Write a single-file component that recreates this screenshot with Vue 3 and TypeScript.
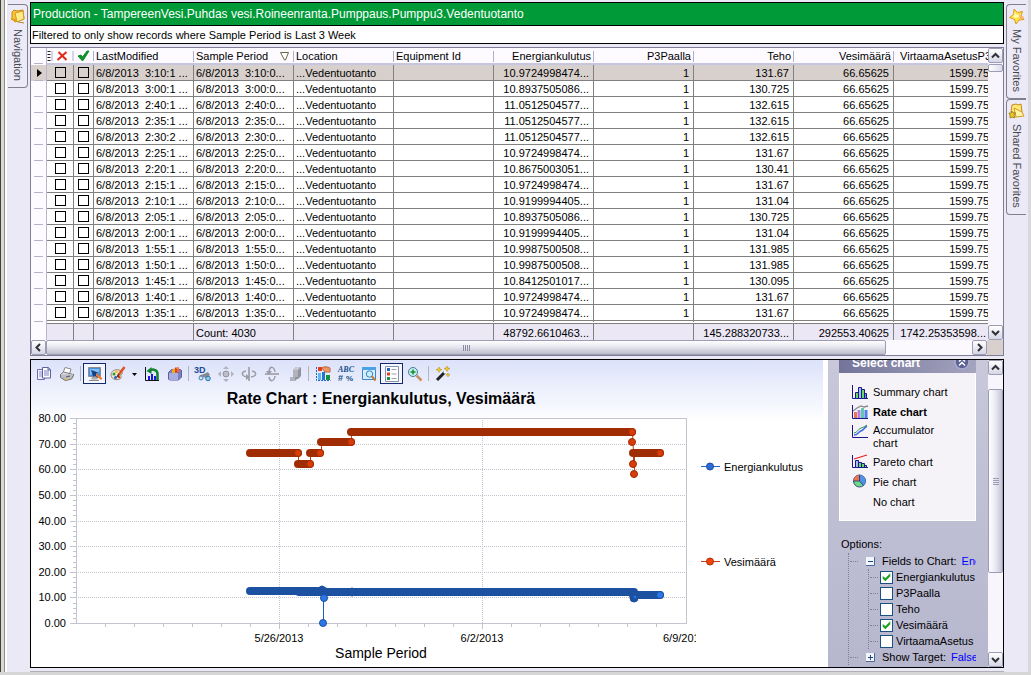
<script setup lang="ts">
interface RecordRow {
  modified: string
  period: string
  energy: string
  power: string
}

interface Tool {
  icon: string
  label: string
  active?: boolean
  menu?: boolean
}

interface Segment {
  from: number
  to: number
  y: number
}

const times: [string, string, string, string][] = [
  ['3:10:1', '3:10:0', '10.9724998474...', '131.67'],
  ['3:00:1', '3:00:0', '10.8937505086...', '130.725'],
  ['2:40:1', '2:40:0', '11.0512504577...', '132.615'],
  ['2:35:1', '2:35:0', '11.0512504577...', '132.615'],
  ['2:30:2', '2:30:0', '11.0512504577...', '132.615'],
  ['2:25:1', '2:25:0', '10.9724998474...', '131.67'],
  ['2:20:1', '2:20:0', '10.8675003051...', '130.41'],
  ['2:15:1', '2:15:0', '10.9724998474...', '131.67'],
  ['2:10:1', '2:10:0', '10.9199994405...', '131.04'],
  ['2:05:1', '2:05:0', '10.8937505086...', '130.725'],
  ['2:00:1', '2:00:0', '10.9199994405...', '131.04'],
  ['1:55:1', '1:55:0', '10.9987500508...', '131.985'],
  ['1:50:1', '1:50:0', '10.9987500508...', '131.985'],
  ['1:45:1', '1:45:0', '10.8412501017...', '130.095'],
  ['1:40:1', '1:40:0', '10.9724998474...', '131.67'],
  ['1:35:1', '1:35:0', '10.9724998474...', '131.67'],
]

const rows: RecordRow[] = times.map(([m, p, energy, power]) => ({
  modified: `6/8/2013  ${m} ...`,
  period: `6/8/2013  ${p}...`,
  energy,
  power,
}))

const toolGroups: Tool[][] = [
  [
    { icon: 'copy', label: 'Copy' },
    { icon: 'print', label: 'Print' },
  ],
  [
    { icon: 'monitor', label: 'Pointer', active: true },
    { icon: 'palette', label: 'Palette', menu: true },
    { icon: 'rotateBars', label: 'Chart type' },
    { icon: 'box', label: 'Gallery' },
  ],
  [
    { icon: 'threeD', label: '3D view' },
    { icon: 'move', label: 'Move' },
    { icon: 'spinY', label: 'Rotate around Y' },
    { icon: 'spinX', label: 'Rotate around X' },
    { icon: 'depth', label: 'Depth' },
  ],
  [
    { icon: 'series', label: 'Series' },
    { icon: 'abc', label: 'Point labels' },
    { icon: 'preview', label: 'Data view' },
    { icon: 'legend', label: 'Legend', active: true },
    { icon: 'zoom', label: 'Zoom' },
  ],
  [{ icon: 'wand', label: 'Wizard' }],
]

const icons: Record<string, string> = {
  copy: '<path d="M1.500 3.500h7v10h-7z" fill="#eef0ff" stroke="#6b6fb0"/><path d="M3 6h4M3 8h4M3 10h4" stroke="#8f93c8"/><path d="M6.500 1.500h6l2 2v8.500h-8z" fill="#fff" stroke="#5e62a4"/><path d="M8 5h5M8 7h5M8 9h5" stroke="#7a7fc0"/><path d="M12 1.500v2.500h2.500" fill="#c5c8ec" stroke="#5e62a4"/>',
  print: '<path d="M4 7l2-5.500 6 1.500-1.500 5z" fill="#fff" stroke="#888"/><path d="M1.500 8.500l3-2.500 10 2.500-2 3.500-7 2z" fill="#e2e2e6" stroke="#777"/><path d="M1.500 8.500v3l5 3 6-1.500 2-3.500v-1.500" fill="#bdbdc6" stroke="#707078"/><path d="M7 11l4-1" stroke="#555"/><path d="M5 13l5 1" stroke="#d8b84a"/>',
  monitor: '<path d="M1.500 1.500h12v9h-12z" fill="#4a8fd8" stroke="#8c8c94"/><path d="M3 3h9v3l-9 3z" fill="#7cc0f4"/><path d="M5 11h5l1 2.500h-7z" fill="#aaa" /><path d="M2 14.500h10" stroke="#888"/><path d="M4 4l7 2.500-2 1.300 3 2.500-1.500 1.700-2.800-2.500-1.300 1.500z" fill="#173c86"/><path d="M9 7l6.500 5.500-1.500 1.500-5-4z" fill="#f07828"/>',
  palette: '<path d="M1 9c0-4 4-6 8-5 4 1 4 3 2 5-1 1 1 2 0 3-2 3-10 2-10-3z" fill="#eee6d8" stroke="#96826a"/><circle cx="4" cy="8" r="1.500" fill="#2a9a38"/><circle cx="6.500" cy="5.800" r="1.300" fill="#e8c020"/><circle cx="5.500" cy="11.500" r="1.500" fill="#2464c8"/><circle cx="9" cy="11" r="1.200" fill="#e03020"/><path d="M14.500 1l-6 8" stroke="#e05020" stroke-width="2.500"/><path d="M9 8l-2 3" stroke="#603818" stroke-width="1.500"/>',
  rotateBars: '<path d="M1.500 1v13.500h13.500" fill="none" stroke="#111"/><path d="M4 10h2v4h-2zM7 8h2v6h-2zM10 10h2v4h-2z" fill="#1818e0"/><path d="M13.500 14v-6c0-4-4-5-7-4" fill="none" stroke="#11832a" stroke-width="2.500"/><path d="M2.500 5l5-4v7z" fill="#11832a"/>',
  box: '<path d="M1.500 6.500l3-3h9l1 1v6.500l-3 3h-9l-1-1z" fill="#7b7fc4" stroke="#5c5e9c"/><path d="M2 7h9v7h-8l-1-1z" fill="#a9addf"/><path d="M5 4l3-2v5h-3z" fill="#e8b020"/><path d="M8 1.500h4v5h-4z" fill="#e04018"/><path d="M9 2h2v4" stroke="#ff9860" fill="none"/>',
  threeD: '<text x="-1" y="7" font-family="Liberation Sans, Arial, sans-serif" font-size="9" font-weight="bold" fill="#1c4c98">3D</text><path d="M4 9.500l5-1.500 4-2 2 3-4 3z" fill="#888890"/><circle cx="6" cy="12" r="2" fill="#c8ecff" stroke="#4a7ea8"/><circle cx="13" cy="12.500" r="2.300" fill="#80d0f8" stroke="#36709c"/>',
  move: '<circle cx="8" cy="8" r="3" fill="#bcbcc6" stroke="#93939f"/><path d="M8 0l3 3h-6zM8 16l3-3h-6zM0 8l3-3v6zM16 8l-3-3v6z" fill="#b2b2be"/>',
  spinY: '<path d="M8 1v14" stroke="#aaaab4" stroke-width="2"/><path d="M5 5c-5 1-5 5 1 6M11 5c5 1 5 5-1 6" fill="none" stroke="#9c9ca8" stroke-width="1.500"/><path d="M5 8l4 3-4 3z" fill="#9c9ca8"/>',
  spinX: '<path d="M1 8h14" stroke="#aaaab4" stroke-width="2"/><path d="M5 5c1-5 5-5 6 1M5 11c1 5 5 5 6-1" fill="none" stroke="#9c9ca8" stroke-width="1.500"/><path d="M2 5l6 0-3 4z" fill="#9c9ca8"/>',
  depth: '<path d="M6 4l3-3h5v9l-3 3h-1l-2 2h-5v-4h3z" fill="#92929c"/><path d="M6 4l3-3h5l-3 3z" fill="#cacad2"/><path d="M6 4h5v7h-3v4h-5v-4h3z" fill="#b2b2bc"/>',
  series: '<path d="M1.500 1v13.500h14" fill="none" stroke="#3060c0" stroke-dasharray="2 1"/><path d="M3 1h4v4h-4z" fill="#e04020"/><path d="M7 2c2-2 6-1 8 0v4h-5z" fill="#f09868" stroke="#b86838"/><path d="M3 7h3v7h-3z" fill="#60b8f0"/><path d="M7 6h3v8h-3z" fill="#2078d0"/><path d="M11 9h4v5h-4z" fill="#18903c"/>',
  abc: '<text x="0" y="6" font-family="Liberation Serif, serif" font-size="8" font-style="italic" font-weight="bold" fill="#16508c">ABC</text><text x="0" y="15" font-family="Liberation Sans, sans-serif" font-size="9" font-weight="bold" fill="#16508c">#</text><text x="8" y="15" font-family="Liberation Sans, sans-serif" font-size="8" font-weight="bold" fill="#16508c">%</text>',
  preview: '<path d="M1.500 1.500h13v12h-13z" fill="#d8ecff" stroke="#3888c8"/><path d="M1 1h14v3h-14z" fill="#48a4e4"/><circle cx="8.500" cy="8" r="3.200" fill="#c8f0ff" stroke="#3a84b4"/><path d="M11 10.500l3.500 4" stroke="#c87830" stroke-width="2"/>',
  legend: '<path d="M1.500.500h13v15h-13z" fill="#fff" stroke="#8890a8"/><path d="M3 2h3v3h-3z" fill="#2060c8"/><path d="M3 6.500h3v3h-3z" fill="#e04020"/><path d="M3 11h3v3h-3z" fill="#189040"/><path d="M7.500 3.500h5M7.500 8h5M7.500 12.500h5" stroke="#98a0b0"/>',
  zoom: '<path d="M9.500 9.500l5 5" stroke="#c89068" stroke-width="2.500"/><circle cx="6" cy="6" r="4.500" fill="#c8ecf8" stroke="#448090"/><path d="M6 3.500v5M3.500 6h5" stroke="#109020" stroke-width="1.500"/>',
  wand: '<path d="M2 14l8-8" stroke="#222" stroke-width="3"/><path d="M9 7l1.500-1.500" stroke="#fff" stroke-width="2.500"/><path d="M4 1l1 2 2 .500-2 1-1 2-1-2-2-1 2-.500zM12 0l1 2 2 .500-2 1-1 2-1-2-2-1 2-.500zM13 7l.700 1.300 1.300.500-1.300.700-.700 1.500-.700-1.500-1.300-.700 1.300-.500z" fill="#f4c828" stroke="#b08818" stroke-width=".5"/>',
  star: '<path d="M5 1l3.500 3.500 5-1-1.500 4.500 3 3.500-5 .500-3 4-1.500-4.500-5-2 4-3z" fill="#ffe23c" stroke="#d8992a"/><path d="M6 4l2 3 4-1-2 3-4 1-2-1z" fill="#fffbb0"/><path d="M10 6l5 3-4 4z" fill="#f8b468"/>',
  folders: '<path d="M2 4l2-2 3 1 6-1 1 9-9 3-3-3z" fill="#f8c838" stroke="#c88818"/><path d="M5 5l8-2 1 8-7 3z" fill="#ffeb88" stroke="#d29a20"/><path d="M1 11l5 1" stroke="#e8a020" stroke-width="2"/><path d="M8 14l6 1" stroke="#b88820"/>',
  sharedFolders: '<path d="M3 2l4-1 2 1 3-1 1 8-8 1-3-1z" fill="#ffe878" stroke="#c88818"/><path d="M5 5l8 4 2 4-8 1z" fill="#fff4a8" stroke="#d29a20"/><path d="M3 8l1 2 3 0-2 2 1 3-3-1-2 1 0-3-1-2 2 0z" fill="#e8c828" stroke="#a88820"/>',
  summary: '<path d="M.500 1v13.500h15.500" fill="none" stroke="#18188c"/><path d="M3.500 8.500h3v6h-3zM9.500 5.500h3v9h-3z" fill="#68d868" stroke="#18188c"/><path d="M6.500 3.500h3v11h-3z" fill="#a8c0f0" stroke="#18188c"/><path d="M12.500 9.500h2v5h-2z" fill="#6890e0" stroke="#18188c"/>',
  rate: '<path d="M.500 1v13.500h15.500" fill="none" stroke="#18188c"/><path d="M2 8h3v6h-3z" fill="#f07050"/><path d="M5.500 6h3v8h-3z" fill="#b080e0"/><path d="M9 4h3v10h-3z" fill="#60c8b0"/><path d="M12.500 6h3v8h-3z" fill="#5080e8"/><path d="M1 7l4-3 4-2 3 1 4-1" fill="none" stroke="#888" stroke-width="1.300"/>',
  accumulator: '<path d="M.500 1v12.500h15.500" fill="none" stroke="#18188c"/><path d="M2 11c4 0 4-3 7-4s4-4 6-5" fill="none" stroke="#3c68e0" stroke-width="1.500"/><path d="M2 9c3 0 4-4 7-5s3-1 6-3" fill="none" stroke="#289a4a"/>',
  pareto: '<path d="M.500 1v12.500h15.500" fill="none" stroke="#18188c"/><path d="M3.500 6.500h3v7h-3z" fill="#a8c0f0" stroke="#18188c"/><path d="M6.500 8.500h3v5h-3zM9.500 9.500h3v4h-3zM12.500 11.500h2v2h-2z" fill="#68d868" stroke="#18188c"/><path d="M2 5l13-4" stroke="#e82020" stroke-width="1.300"/>',
  pie: '<circle cx="7.500" cy="7" r="6" fill="#70d888" stroke="#304878"/><path d="M7.500 7v-6a6 6 0 0 1 4 10.500z" fill="#5090e8"/><path d="M7.500 7h-6a6 6 0 0 1 6-6z" fill="#f07050"/><path d="M7.500 1v6l4 4.500M7.500 7h-6" fill="none" stroke="#304878"/>',
  none: '',
}

const charts = [
  { icon: 'summary', label: 'Summary chart' },
  { icon: 'rate', label: 'Rate chart', current: true },
  { icon: 'accumulator', label: 'Accumulator chart' },
  { icon: 'pareto', label: 'Pareto chart' },
  { icon: 'pie', label: 'Pie chart' },
  { icon: 'none', label: 'No chart' },
]

const fields = [
  { name: 'Energiankulutus', on: true },
  { name: 'P3Paalla', on: false },
  { name: 'Teho', on: false },
  { name: 'Vesimäärä', on: true },
  { name: 'VirtaamaAsetus', on: false },
]

// Plot area inside the drawing
const plot = { left: 45, right: 655, top: 31, bottom: 236 }
const yLabels = [0, 10, 20, 30, 40, 50, 60, 70, 80]
const yMinor = Array.from({ length: 41 }, (_, i) => i * 2)
const xTicks = Array.from({ length: 20 }, (_, i) => plot.left + (i + 1) * 29).filter((x) => x < 650)

function valueY(v: number): number {
  return Math.round(plot.bottom - (v * (plot.bottom - plot.top)) / 80)
}

const flowSegments: Segment[] = [
  { from: 219, to: 267, y: 66 },
  { from: 267, to: 279, y: 77 },
  { from: 279, to: 289, y: 66 },
  { from: 290, to: 320, y: 55 },
  { from: 320, to: 601, y: 45 },
  { from: 602, to: 629, y: 66 },
]
const flowPoints: [number, number][] = [
  [267, 66], [279, 77], [289, 66], [320, 55], [601, 45],
  [601, 55], [602, 77], [603, 87], [629, 66],
]
const energySegments: Segment[] = [
  { from: 219, to: 293, y: 204 },
  { from: 268, to: 294, y: 205 },
  { from: 293, to: 603, y: 205 },
  { from: 602, to: 629, y: 208 },
]
</script>

<template>
  <div class="app">
    <nav class="rail rail-left">
      <button class="tab tab-left" type="button">
        <svg class="icon" viewBox="0 0 16 16" v-html="icons.folders" />
        <span>Navigation</span>
      </button>
    </nav>

    <main class="content">
      <h1 class="title">Production - TampereenVesi.Puhdas vesi.Roineenranta.Pumppaus.Pumppu3.Vedentuotanto</h1>
      <p class="filter">Filtered to only show records where Sample Period is Last 3 Week</p>

      <section class="grid">
        <div class="grid-body">
          <div class="table-clip">
            <table>
              <colgroup>
                <col class="c-mark" /><col class="c-del" /><col class="c-ok" />
                <col v-for="n in 9" :key="n" class="c-data" />
              </colgroup>
              <thead>
                <tr>
                  <th class="mark"><span class="tick-line" /></th>
                  <th class="icon-head">
                    <svg class="head-icon" viewBox="0 0 26 14">
                      <path d="M0 2.500h3M0 5.500h3M0 8.500h3M0 11.500h3" stroke="#222" />
                      <path d="M4.500 2v10" stroke="#b0b0cc" />
                      <path d="M11 3l8 8M19 3l-9 8" stroke="#e02818" stroke-width="2" />
                      <path d="M25.500 2v10" stroke="#b0b0cc" />
                    </svg>
                  </th>
                  <th class="icon-head">
                    <svg class="head-icon" viewBox="0 0 20 14">
                      <path d="M4 7l3-1 1.500 2 4.500-6 2 0-5 8-1.500 2z" fill="#11902a" stroke="#11902a" />
                      <path d="M19.500 2v10" stroke="#b0b0cc" />
                    </svg>
                  </th>
                  <th><span>LastModified</span></th>
                  <th>
                    <span class="sorted">Sample Period
                      <svg class="sort" viewBox="0 0 9 9"><path d="M.500.500h8l-3 7.500h-1z" fill="#fff" stroke="#6a6a44" /></svg>
                    </span>
                  </th>
                  <th><span>Location</span></th>
                  <th><span>Equipment Id</span></th>
                  <th class="num"><span>Energiankulutus</span></th>
                  <th class="num"><span>P3Paalla</span></th>
                  <th class="num"><span>Teho</span></th>
                  <th class="num"><span>Vesimäärä</span></th>
                  <th class="num"><span>VirtaamaAsetusP3</span></th>
                </tr>
              </thead>
              <tbody>
                <tr v-for="(r, i) in rows" :key="i" :class="{ selected: i === 0 }">
                  <td class="mark">
                    <span class="tick-line">
                      <svg v-if="i === 0" class="pointer" viewBox="0 0 5 8"><path d="M0 0l5 4-5 4z" /></svg>
                    </span>
                  </td>
                  <td class="pick"><input type="checkbox" :aria-label="`Delete record ${i + 1}`" /></td>
                  <td class="pick"><input type="checkbox" :aria-label="`Approve record ${i + 1}`" /></td>
                  <td>{{ r.modified }}</td>
                  <td>{{ r.period }}</td>
                  <td>...Vedentuotanto</td>
                  <td></td>
                  <td class="num">{{ r.energy }}</td>
                  <td class="num">1</td>
                  <td class="num">{{ r.power }}</td>
                  <td class="num">66.65625</td>
                  <td class="num">1599.75</td>
                </tr>
              </tbody>
              <tfoot>
                <tr>
                  <td class="mark"></td>
                  <td></td>
                  <td></td>
                  <td></td>
                  <td>Count: 4030</td>
                  <td></td>
                  <td></td>
                  <td class="num">48792.6610463...</td>
                  <td></td>
                  <td class="num">145.288320733...</td>
                  <td class="num">292553.40625</td>
                  <td class="num wide">1742.25353598...</td>
                </tr>
              </tfoot>
            </table>
          </div>
          <div class="vscroll">
            <button class="arrow" type="button" aria-label="Scroll up">
              <svg viewBox="0 0 9 9"><path d="M1 6.500l3.500-3.500 3.500 3.500" /></svg>
            </button>
            <div class="thumb thumb-small" />
            <div class="space" />
            <button class="arrow" type="button" aria-label="Scroll down">
              <svg viewBox="0 0 9 9"><path d="M1 3l3.500 3.500 3.500-3.500" /></svg>
            </button>
          </div>
        </div>
        <div class="hscroll">
          <button class="arrow" type="button" aria-label="Scroll left">
            <svg viewBox="0 0 9 9"><path d="M6 1l-3.500 3.500 3.500 3.500" /></svg>
          </button>
          <div class="track">
            <div class="thumb thumb-wide"><span class="grip" /></div>
          </div>
          <button class="arrow" type="button" aria-label="Scroll right">
            <svg viewBox="0 0 9 9"><path d="M3 1l3.500 3.500-3.500 3.500" /></svg>
          </button>
          <span class="corner" />
        </div>
      </section>

      <section class="chart-panel">
        <div class="chart-main">
          <div class="toolbar" role="toolbar">
            <template v-for="(group, g) in toolGroups" :key="g">
              <span v-if="g > 0" class="divider" />
              <template v-for="t in group" :key="t.icon">
                <button class="tool" :class="{ active: t.active }" type="button" :aria-label="t.label">
                  <svg class="icon" viewBox="0 0 16 16" v-html="icons[t.icon]" />
                </button>
                <button v-if="t.menu" class="caret" type="button" :aria-label="`${t.label} menu`">
                  <svg viewBox="0 0 5 3"><path d="M0 0h5l-2.500 3z" /></svg>
                </button>
              </template>
            </template>
          </div>

          <svg class="plot" viewBox="0 0 797 280">
            <text class="chart-title" x="350" y="17" text-anchor="middle">Rate Chart : Energiankulutus, Vesimäärä</text>
            <g shape-rendering="crispEdges">
              <rect :x="plot.left" :y="plot.top" :width="plot.right - plot.left" :height="plot.bottom - plot.top" fill="#fff" />
              <g class="dots">
                <line v-for="v in yLabels.slice(1, 8)" :key="v" :x1="plot.left" :x2="plot.right" :y1="valueY(v) + .5" :y2="valueY(v) + .5" />
                <line v-for="x in [248, 451]" :key="x" :x1="x + .5" :x2="x + .5" :y1="plot.top" :y2="plot.bottom" />
              </g>
              <g class="axis">
                <rect :x="plot.left + .5" :y="plot.top + .5" :width="plot.right - plot.left" :height="plot.bottom - plot.top" />
                <line v-for="v in yMinor" :key="v" :x1="v % 10 ? 42 : 39" :x2="plot.left" :y1="valueY(v) + .5" :y2="valueY(v) + .5" />
                <line v-for="x in xTicks" :key="x" :x1="x + .5" :x2="x + .5" :y1="plot.bottom" :y2="x === 248 || x === 451 ? 242 : 240" />
              </g>
            </g>
            <g class="label" text-anchor="end">
              <text v-for="v in yLabels" :key="v" x="35" :y="valueY(v) + 4">{{ v.toFixed(2) }}</text>
            </g>
            <g class="label" text-anchor="middle">
              <text x="248" y="255">5/26/2013</text>
              <text x="451" y="255">6/2/2013</text>
            </g>
            <svg x="632" y="243" width="33" height="16"><text class="label" x="0" y="12">6/9/2013</text></svg>
            <text class="axis-title" x="350" y="271" text-anchor="middle">Sample Period</text>

            <g class="energy">
              <path class="link" d="M292.500 210v26" />
              <line v-for="(s, i) in energySegments" :key="i" class="band" :x1="s.from" :x2="s.to" :y1="s.y" :y2="s.y" />
              <circle cx="291" cy="202" r="3" class="solid" />
              <circle cx="321" cy="205" r="4" class="solid" />
              <circle cx="293" cy="211" r="3.500" />
              <circle cx="292" cy="236" r="3.500" />
              <circle cx="603" cy="211" r="4" class="solid" />
              <circle cx="604" cy="210" r="1" class="bright" />
              <circle cx="629" cy="208" r="3.500" />
            </g>
            <g class="flow">
              <path class="link" d="M267.500 66v11M279.500 77v-11M290.500 66v-11M320.500 55v-10M601.500 45l1 21v11M603.500 66v21" />
              <line v-for="(s, i) in flowSegments" :key="i" class="band" :x1="s.from" :x2="s.to" :y1="s.y" :y2="s.y" />
              <circle v-for="([x, y], i) in flowPoints" :key="i" :cx="x" :cy="y" r="3.500" />
            </g>

            <path d="M670 79.500h19" stroke="#2468c8" />
            <circle cx="679" cy="79.500" r="3.500" fill="#2a6cd8" stroke="#1c4ca0" />
            <text class="label" x="693" y="84">Energiankulutus</text>
            <path d="M670 174.500h19" stroke="#c83c10" />
            <circle cx="679" cy="174.500" r="3.500" fill="#f04408" stroke="#b03008" />
            <text class="label" x="693" y="179">Vesimäärä</text>
          </svg>
        </div>

        <aside class="side">
          <header class="side-head">
            <h2>Select chart</h2>
            <svg class="collapse" viewBox="0 0 16 16">
              <circle cx="8" cy="8" r="7" fill="#5c6294" stroke="#a8acd0" stroke-width="1.500" />
              <path d="M5 7.500l3-3 3 3M5 11.500l3-3 3 3" fill="none" stroke="#fff" stroke-width="1.500" />
            </svg>
          </header>
          <ul class="chart-list">
            <li v-for="c in charts" :key="c.icon">
              <button type="button" :class="{ current: c.current }">
                <svg class="icon" viewBox="0 0 16 16" v-html="icons[c.icon]" />
                <span>{{ c.label }}</span>
              </button>
            </li>
          </ul>
          <div class="options">Options:</div>
          <div class="tree">
            <div class="node">
              <svg class="toggle" viewBox="0 0 9 9"><rect width="9" height="9" fill="#f4f6ff" /><path d="M8.500 0v8.500h-8.500" fill="none" stroke="#486898" /><path d="M2 4.500h5" stroke="#204880" /></svg>
              <span>Fields to Chart:</span><a href="#">Energiankulutus</a>
            </div>
            <div class="children">
              <label v-for="f in fields" :key="f.name" class="leaf">
                <input type="checkbox" :checked="f.on" /><span>{{ f.name }}</span>
              </label>
            </div>
            <div class="node">
              <svg class="toggle" viewBox="0 0 9 9"><rect width="9" height="9" fill="#f4f6ff" /><path d="M8.500 0v8.500h-8.500" fill="none" stroke="#486898" /><path d="M2 4.500h5M4.500 2v5" stroke="#204880" /></svg>
              <span>Show Target:</span><a href="#">False</a>
            </div>
          </div>
        </aside>

        <div class="vscroll">
          <button class="arrow" type="button" aria-label="Scroll options up">
            <svg viewBox="0 0 9 9"><path d="M1 6.500l3.500-3.500 3.500 3.500" /></svg>
          </button>
          <div class="gap" />
          <div class="thumb thumb-tall"><span class="grip" /></div>
          <div class="space" />
          <button class="arrow" type="button" aria-label="Scroll options down">
            <svg viewBox="0 0 9 9"><path d="M1 3l3.500 3.500 3.500-3.500" /></svg>
          </button>
        </div>
      </section>
    </main>

    <nav class="rail rail-right">
      <button class="tab tab-right" type="button">
        <svg class="icon" viewBox="0 0 16 16" v-html="icons.star" />
        <span>My Favorites</span>
      </button>
      <button class="tab tab-right" type="button">
        <svg class="icon" viewBox="0 0 16 16" v-html="icons.sharedFolders" />
        <span>Shared Favorites</span>
      </button>
    </nav>
  </div>
</template>

<style>
body {
  background: #ebe9f5;
}
</style>

<style scoped>
* {
  box-sizing: border-box;
}
.app {
  display: grid;
  grid-template-columns: 30px minmax(0, 1fr) 27px;
  height: 100vh;
  min-height: 560px;
  overflow: hidden;
  border-bottom: 3px solid #d6d6d6;
  background: #ebe9f5;
  color: #000;
  font: 11px/13px "Liberation Sans", Arial, sans-serif;
}
button {
  margin: 0;
  padding: 0;
  border: 0;
  background: none;
  color: inherit;
  font: inherit;
  text-align: left;
}
h1, h2, p, ul {
  margin: 0;
  padding: 0;
}
.icon {
  width: 16px;
  height: 16px;
  flex: none;
  overflow: visible;
}

.rail {
  display: flex;
  flex-direction: column;
  padding-top: 4px;
}
.rail-left {
  border-left: 1px solid #40403c;
  box-shadow: inset 3px 0 #ddd9d0, inset 4px 0 #8c8c94, inset 6px 0 #fff;
  padding-left: 7px;
}
.rail-right {
  border-right: 3px solid #d8d8d8;
  padding-left: 2px;
}
.tab {
  display: flex;
  flex-direction: column;
  align-items: center;
  gap: 5px;
  padding: 3px 0 6px;
  border: 1px solid #80808c;
  background: #eceaf6;
  color: #484850;
}
.tab span {
  writing-mode: vertical-rl;
}
.tab-left {
  width: 20px;
  border-left: 0;
  border-radius: 0 4px 4px 0;
}
.tab-right {
  width: 20px;
  border-right: 0;
  border-radius: 4px 0 0 4px;
}

.content {
  display: flex;
  flex-direction: column;
  min-width: 0;
  padding: 2px 0 3px;
  border-bottom: 1px solid #b0b0b8;
}
.title {
  height: 24px;
  padding-left: 2px;
  border: 1px solid #000;
  background: #009a38;
  color: #fff;
  font-size: 12px;
  font-weight: normal;
  line-height: 22px;
}
.filter {
  height: 18px;
  padding-left: 1px;
  border: 1px solid #000;
  border-top: 0;
  background: #fff;
  line-height: 18px;
}

.grid {
  margin-top: 3px;
  border: 1px solid #7e7e96;
  background: #fff;
}
.grid-body {
  display: flex;
}
.table-clip {
  flex: 1;
  min-width: 0;
  overflow: hidden;
}
table {
  width: 963px;
  table-layout: fixed;
  border-collapse: separate;
  border-spacing: 0;
}
.c-mark { width: 16px; }
.c-del { width: 27px; }
.c-ok { width: 20px; }
.c-data { width: 100px; }
th, td {
  overflow: hidden;
  padding: 2px 2px 0;
  text-align: left;
  white-space: pre;
}
th {
  height: 17px;
  padding: 1px 0 0;
  border-bottom: 2px solid #c6c6de;
  background: #fdfbff;
  font-weight: normal;
}
th > span:not(.tick-line) {
  display: block;
  padding: 0 2px;
  border-right: 1px solid #b0b0cc;
  line-height: 11px;
}
th > span.sorted {
  display: flex;
  justify-content: space-between;
  align-items: center;
  padding-right: 4px;
  white-space: nowrap;
}
th.icon-head {
  padding: 0;
  line-height: 0;
  white-space: normal;
}
.head-icon {
  display: block;
  width: 100%;
  height: 14px;
}
.sort {
  width: 9px;
  height: 9px;
}
td {
  height: 16px;
  border-right: 1px solid #808080;
  border-bottom: 1px solid #808080;
  line-height: 13px;
}
.num {
  padding-right: 4px;
  text-align: right;
}
th.num {
  padding-right: 0;
}
tbody tr:last-child td {
  height: 19px;
  border-bottom: 4px double #808080;
}
td.mark, th.mark,
tbody tr:last-child td.mark {
  padding: 0 3px;
  border-right: 1px solid #b8b8cc;
  border-bottom: 0;
  background: #fdfbff;
}
.tick-line {
  display: flex;
  align-items: center;
  height: 15px;
  padding-left: 3px;
  border-bottom: 1px solid #b4b4c8;
}
.pointer {
  width: 5px;
  height: 8px;
}
.selected td {
  background: #d8d0cc;
}
.pick {
  padding: 0;
  line-height: 0;
  text-align: center;
  vertical-align: middle;
}
.pick input {
  appearance: none;
  width: 11px;
  height: 11px;
  margin: 0;
  border: 1px solid #000;
  background: #fff;
  vertical-align: middle;
}
.selected input {
  background: transparent;
}
tfoot td {
  border-bottom: 0;
  background: #ebe7f5;
}
tfoot .num.wide {
  padding-right: 7px;
}

.vscroll {
  display: flex;
  flex: none;
  flex-direction: column;
  width: 15px;
  background: #f8f6fc;
}
.arrow {
  display: flex;
  flex: none;
  align-items: center;
  justify-content: center;
  width: 15px;
  height: 15px;
  border: 1px solid #9c9cb4;
  border-radius: 2px;
  background: linear-gradient(#fff, #d6d6e6);
}
.arrow svg {
  width: 9px;
  height: 9px;
  fill: none;
  stroke: #303038;
  stroke-width: 2;
}
.space {
  flex: 1;
}
.gap {
  height: 14px;
}
.thumb {
  display: flex;
  align-items: center;
  justify-content: center;
  border: 1px solid #9c9cb4;
  border-radius: 2px;
}
.thumb-small {
  height: 8px;
  margin-top: 1px;
  background: linear-gradient(90deg, #fff, #dcdcea);
}
.thumb-tall {
  flex: 0 1 184px;
  background: linear-gradient(90deg, #fff, #e8e8f4 50%, #c4c4d8);
}
.thumb-tall .grip {
  width: 6px;
  height: 7px;
  background: repeating-linear-gradient(#9c9cb4 0 1px, transparent 1px 2px);
}
.hscroll {
  display: flex;
  height: 15px;
  background: #fbf9fe;
}
.track {
  flex: 1;
}
.thumb-wide {
  width: calc(100% - 86px);
  height: 15px;
  background: linear-gradient(#fff, #e4e4ee 50%, #bcbccc);
}
.thumb-wide .grip {
  width: 7px;
  height: 6px;
  background: repeating-linear-gradient(90deg, #8c8ca4 0 1px, transparent 1px 2px);
}
.corner {
  width: 16px;
  background: #d8d0cc;
}

.chart-panel {
  display: flex;
  flex: 1 1 0;
  min-height: 0;
  margin-top: 3px;
  overflow: hidden;
  border: 1px solid #000;
  background: #fff;
}
.chart-main {
  flex: 1;
  min-width: 0;
  overflow: hidden;
  border-right: 5px solid #fff;
  background: linear-gradient(#dce2fa, #fff 62px);
}
.toolbar {
  display: flex;
  align-items: center;
  height: 27px;
  padding-left: 1px;
}
.tool {
  display: flex;
  flex: none;
  align-items: center;
  justify-content: center;
  width: 23px;
  height: 21px;
  border: 1px solid transparent;
}
.tool.active {
  border-color: #14286c;
  background: #f4f7ff;
}
.caret {
  width: 11px;
  line-height: 0;
  text-align: center;
}
.caret svg {
  width: 5px;
  height: 3px;
}
.divider {
  width: 1px;
  height: 15px;
  margin: 0 2px;
  background: #b4b4bc;
}
.plot {
  display: block;
  width: calc(100% + 5px);
  font-family: "Liberation Sans", Arial, sans-serif;
}
.label {
  font-size: 11px;
}
.chart-title {
  font-size: 16px;
  font-weight: bold;
}
.axis-title {
  font-size: 14px;
}
.axis {
  fill: none;
  stroke: #c4c4d0;
}
.dots {
  stroke: #c4c4d0;
  stroke-dasharray: 1 1;
}
.band {
  stroke-width: 8;
  stroke-linecap: round;
}
.flow .band { stroke: #a02c04; }
.flow .link { fill: none; stroke: #c03c10; }
.flow circle { fill: #d83c08; stroke: #a02c04; }
.energy .band { stroke: #1c50a0; }
.energy .link { fill: none; stroke: #1c5cb4; }
.energy circle { fill: #2c78e8; stroke: #1c50a0; }
.energy .solid { fill: #1c50a0; }
.energy .bright { stroke: #2c78e8; }

.side {
  display: flex;
  flex: none;
  flex-direction: column;
  width: 160px;
  padding: 0 12px 0 11px;
  overflow: hidden;
  background: linear-gradient(#c8c8da, #b6b6ce);
}
.side-head {
  display: flex;
  flex: none;
  align-items: flex-end;
  justify-content: space-between;
  height: 13px;
  padding: 0 6px 0 13px;
  overflow: hidden;
  background: linear-gradient(90deg, #74749a, #a4a4be);
  color: #fff;
}
.side-head h2 {
  font-size: 12px;
  line-height: 20px;
}
.collapse {
  width: 16px;
  height: 16px;
  margin-bottom: 3px;
}
.chart-list {
  flex: none;
  padding: 9px 0 8px;
  border: 1px solid #fff;
  border-top: 0;
  background: #f6f3f8;
  list-style: none;
}
.chart-list button {
  display: flex;
  align-items: center;
  gap: 5px;
  min-height: 20px;
  padding: 2px 20px 2px 12px;
}
.chart-list .icon {
  align-self: flex-start;
}
.chart-list .current {
  font-weight: bold;
}
.options {
  flex: none;
  padding: 17px 0 2px 2px;
}
.tree {
  flex: none;
  margin-left: 9px;
  border-left: 1px dotted #808090;
}
.node {
  display: flex;
  align-items: center;
  height: 16px;
  overflow: hidden;
  white-space: nowrap;
}
.node::before {
  flex: none;
  width: 8px;
  margin: 0 8px 0 1px;
  border-top: 1px dotted #808090;
  content: "";
}
.toggle {
  flex: none;
  width: 9px;
  height: 9px;
  margin-right: 7px;
}
.node a {
  margin-left: 5px;
  color: #00f;
  text-decoration: none;
}
.children {
  margin-left: 19px;
  border-left: 1px dotted #808090;
}
.leaf {
  display: flex;
  align-items: center;
  height: 16px;
  overflow: hidden;
  white-space: nowrap;
}
.leaf::before {
  flex: none;
  width: 8px;
  margin: 0 2px 0 1px;
  border-top: 1px dotted #808090;
  content: "";
}
.leaf input {
  appearance: none;
  flex: none;
  width: 13px;
  height: 13px;
  margin: 0 3px 0 0;
  border: 1px solid #1c5080;
  background: #fff;
}
.leaf input:checked::before {
  display: block;
  width: 9px;
  height: 9px;
  margin: 1px;
  background: #21a121;
  clip-path: polygon(8% 38%, 38% 62%, 92% 8%, 92% 42%, 38% 96%, 8% 70%);
  content: "";
}
</style>
